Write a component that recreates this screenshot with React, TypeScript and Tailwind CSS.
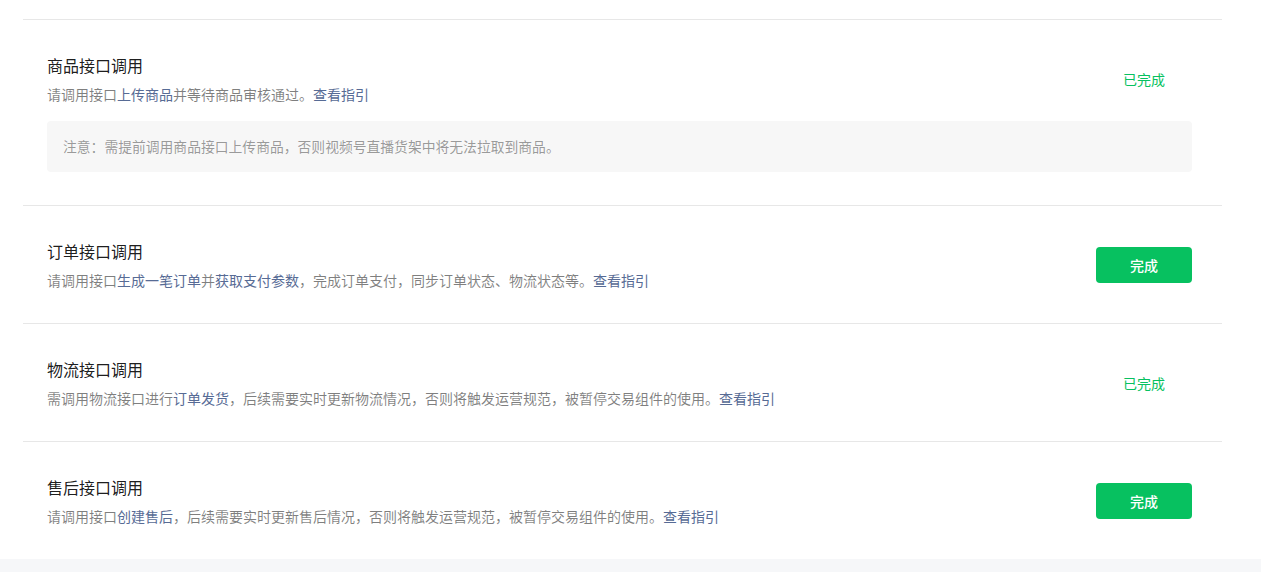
import * as React from 'react';

type Part = { text: string; link?: boolean };

interface Step {
  title: string;
  desc: Part[];
  done: boolean;
  note?: string;
}

const steps: Step[] = [
  {
    title: '商品接口调用',
    desc: [
      { text: '请调用接口' },
      { text: '上传商品', link: true },
      { text: '并等待商品审核通过。' },
      { text: '查看指引', link: true },
    ],
    done: true,
    note: '注意：需提前调用商品接口上传商品，否则视频号直播货架中将无法拉取到商品。',
  },
  {
    title: '订单接口调用',
    desc: [
      { text: '请调用接口' },
      { text: '生成一笔订单', link: true },
      { text: '并' },
      { text: '获取支付参数', link: true },
      { text: '，完成订单支付，同步订单状态、物流状态等。' },
      { text: '查看指引', link: true },
    ],
    done: false,
  },
  {
    title: '物流接口调用',
    desc: [
      { text: '需调用物流接口进行' },
      { text: '订单发货', link: true },
      { text: '，后续需要实时更新物流情况，否则将触发运营规范，被暂停交易组件的使用。' },
      { text: '查看指引', link: true },
    ],
    done: true,
  },
  {
    title: '售后接口调用',
    desc: [
      { text: '请调用接口' },
      { text: '创建售后', link: true },
      { text: '，后续需要实时更新售后情况，否则将触发运营规范，被暂停交易组件的使用。' },
      { text: '查看指引', link: true },
    ],
    done: false,
  },
];

function StepRow({ step }: { step: Step }) {
  return (
    <div className="border-t border-[#e7e7e7] pl-[24px] pr-[30px] pt-[34px] pb-[33px]">
      <div className="flex items-center justify-between">
        <div>
          <h3 className="text-[16px] leading-[22px] text-[rgba(0,0,0,0.9)]">{step.title}</h3>
          <p className="mt-[8px] text-[14px] leading-[20px] text-[rgba(0,0,0,0.5)]">
            {step.desc.map((p, i) =>
              p.link ? (
                <a key={i} className="text-[#576b95] cursor-pointer">
                  {p.text}
                </a>
              ) : (
                <span key={i}>{p.text}</span>
              )
            )}
          </p>
        </div>
        <div className="w-[96px] flex justify-center shrink-0">
          {step.done ? (
            <span className="text-[14px] leading-[20px] text-[#07c160]">已完成</span>
          ) : (
            <button
              type="button"
              className="w-[96px] h-[36px] rounded-[4px] bg-[#07c160] text-white text-[14px] font-medium"
            >
              完成
            </button>
          )}
        </div>
      </div>
      {step.note && (
        <div className="mt-[17px] h-[51px] flex items-center rounded-[4px] bg-[#f7f7f7] px-[16px] text-[13.8px] text-[rgba(0,0,0,0.4)]">
          {step.note}
        </div>
      )}
    </div>
  );
}

export default function App() {
  return (
    <div
      className="min-h-screen bg-[#f6f7f9]"
      style={{ fontFamily: '"Noto Sans CJK SC", "Noto Sans", sans-serif' }}
    >
      <div className="bg-white pt-[19px] pl-[23px] pr-[39px]">
        {steps.map((s) => (
          <StepRow key={s.title} step={s} />
        ))}
      </div>
    </div>
  );
}
